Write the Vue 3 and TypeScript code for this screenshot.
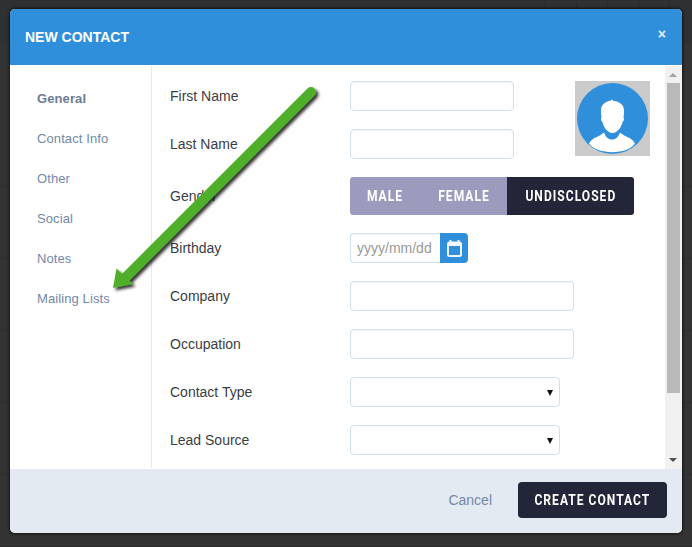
<script setup lang="ts">
const navItems: string[] = ['General', 'Contact Info', 'Other', 'Social', 'Notes', 'Mailing Lists']
</script>

<template>
  <div class="backdrop">
    <div class="modal">
      <header class="head">
        <h1>NEW CONTACT</h1>
        <span class="close">×</span>
      </header>
      <div class="body">
        <nav class="side">
          <a v-for="(n, i) in navItems" :key="n" :class="{ on: i === 0 }">{{ n }}</a>
        </nav>
        <div class="form">
          <div class="row"><label>First Name</label><input class="short" /></div>
          <div class="row"><label>Last Name</label><input class="short" /></div>
          <div class="row gender">
            <label>Gender</label>
            <div class="seg">
              <span class="male"><b>MALE</b></span><span class="female"><b>FEMALE</b></span><span class="und"><b>UNDISCLOSED</b></span>
            </div>
          </div>
          <div class="row">
            <label>Birthday</label>
            <div class="date">
              <input class="dinp" placeholder="yyyy/mm/dd" />
              <span class="cal">
                <svg width="15" height="17" viewBox="0 0 15 17">
                  <rect x="1" y="2.500" width="13" height="13.500" rx="1.500" fill="none" stroke="#f0f6fc" stroke-width="2" />
                  <rect x="1" y="2" width="13" height="4" fill="#f0f6fc" />
                  <rect x="2.500" y="0" width="2" height="3" fill="#f0f6fc" />
                  <rect x="10.500" y="0" width="2" height="3" fill="#f0f6fc" />
                </svg>
              </span>
            </div>
          </div>
          <div class="row"><label>Company</label><input class="long" /></div>
          <div class="row"><label>Occupation</label><input class="long" /></div>
          <div class="row"><label>Contact Type</label><div class="sel"><i></i></div></div>
          <div class="row"><label>Lead Source</label><div class="sel"><i></i></div></div>
          <div class="avatar">
            <svg width="71" height="71" viewBox="0 0 71 71">
              <circle cx="35.5" cy="35.5" r="35.5" fill="#308fda" />
              <path d="M12 60.500c2-4 6-6 10-7.500l5-3.500c1.500 4.500 4.500 7 8 7s6.500-2.500 8-7l5 3.500c4 1.500 8 3.500 10 7.500C51 72 20 72 12 60.500z" fill="#fff" />
              <path d="M33 18l2-1.500 1.500 1.500c6 .5 10.500 3.500 10.500 9.500 0 2.500 0 4.500-.500 7 1 1.500.500 3.500-1 4.500-1 5-5 11-10 11s-9-6-10-11c-1.500-1-2-3-1-4.500-.500-2.500-.500-4.500-.500-7 0-5.500 4-8.500 9-10z" fill="#fff" />
            </svg>
          </div>
        </div>
        <div class="bar">
          <span class="up"></span>
          <span class="thumb"></span>
          <span class="down"></span>
        </div>
      </div>
      <footer class="foot">
        <span class="cancel">Cancel</span>
        <span class="create"><b>CREATE CONTACT</b></span>
      </footer>
    </div>
    <svg class="arrow" width="692" height="547" viewBox="0 0 692 547">
      <defs>
        <filter id="sh" x="-10%" y="-10%" width="130%" height="130%">
          <feDropShadow dx="2.500" dy="2.500" stdDeviation="1.800" flood-color="#000" flood-opacity="0.8" />
        </filter>
      </defs>
      <g filter="url(#sh)" fill="#50ae2b">
        <path d="M311 92L125 278" stroke="#50ae2b" stroke-width="10" stroke-linecap="round" fill="none" />
        <path d="M113 288L116.500 268.500L133 284z" />
      </g>
    </svg>
  </div>
</template>

<style>
html, body { margin: 0; background: #333; }
</style>

<style scoped>
.backdrop {
  position: relative;
  width: 692px;
  height: 547px;
  overflow: hidden;
  padding: 9px 10px 14px;
  box-sizing: border-box;
  background:
    repeating-linear-gradient(90deg, rgba(0, 0, 0, 0.18) 0 1px, transparent 1px 31px) 545px 2px / 147px 8px no-repeat,
    repeating-linear-gradient(0deg, rgba(0, 0, 0, 0.1) 0 1px, transparent 1px 72px) 0 132px / 100% 415px no-repeat,
    linear-gradient(#2f3032, #2f3032) 0 0 / 100% 43px no-repeat,
    #333;
  font-family: "Liberation Sans", Arial, sans-serif;
}
.modal {
  width: 672px;
  height: 524px;
  border-radius: 5px;
  overflow: hidden;
  display: flex;
  flex-direction: column;
  background: #fff;
  box-shadow: 0 0 3px 1px rgba(0, 0, 0, 0.6);
}
.head {
  height: 56px;
  flex: none;
  background: #308fda;
  display: flex;
  align-items: flex-start;
  justify-content: space-between;
  padding: 0 15px;
  box-sizing: border-box;
  color: #fff;
}
.head h1 {
  margin: 21px 0 0;
  font-size: 14px;
  line-height: 14px;
  font-weight: 700;
}
.close {
  font-size: 14px;
  font-weight: 700;
  line-height: 16px;
  margin: 17px 1px 0 0;
  color: #e6f1fa;
}
.body {
  flex: 1;
  display: flex;
  min-height: 0;
  padding-top: 1px;
}
.side {
  width: 142px;
  flex: none;
  box-sizing: border-box;
  border-right: 1px solid #e5e9ee;
  padding: 25px 0 0 27px;
  margin-bottom: 1px;
  display: flex;
  flex-direction: column;
  gap: 24px;
}
.side a {
  font-size: 13px;
  line-height: 16px;
  letter-spacing: 0.1px;
  color: #7388a8;
}
.side a.on {
  font-weight: 700;
  color: #6d7b96;
}
.form {
  flex: 1;
  position: relative;
  padding: 15px 0 0 18px;
  display: flex;
  flex-direction: column;
  gap: 18px;
  min-width: 0;
}
.row {
  display: flex;
  align-items: center;
  height: 30px;
}
.row.gender { height: 38px; }
.row label {
  width: 180px;
  flex: none;
  font-size: 14px;
  color: #3a3d44;
}
input, .sel {
  box-sizing: border-box;
  height: 30px;
  border: 1px solid #cfdfec;
  border-radius: 4px;
  background: #fff;
  box-shadow: inset 0 1px 1px rgba(0, 0, 0, 0.05);
  outline: none;
  padding: 0;
}
.short { width: 164px; }
.long { width: 224px; }
.sel { width: 210px; position: relative; box-shadow: none; }
.sel i {
  position: absolute;
  right: 6px;
  top: 12px;
  width: 0;
  height: 0;
  border-left: 3px solid transparent;
  border-right: 3px solid transparent;
  border-top: 6px solid #111;
}
.seg {
  display: flex;
  height: 38px;
  width: 284px;
  border-radius: 3px;
  overflow: hidden;
  font-family: "Roboto", sans-serif;
  font-size: 14px;
  letter-spacing: 1.2px;
  color: #fff;
  line-height: 38px;
  text-align: center;
}
.seg b, .create b {
  display: inline-block;
  font-weight: 700;
  transform: scaleX(0.86);
}
.male { width: 71px; background: #9a9bbd; }
.female { width: 86px; background: #9a9bbd; }
.und { width: 127px; background: #232538; }
.date { display: flex; }
.dinp {
  width: 90px;
  border-radius: 4px 0 0 4px;
  border-right: none;
  padding-left: 6px;
  font-family: "Liberation Sans", sans-serif;
  font-size: 14px;
}
.dinp::placeholder { color: #999; opacity: 1; }
.cal {
  width: 28px;
  height: 30px;
  background: #308fda;
  border-radius: 0 4px 4px 0;
  display: flex;
  align-items: center;
  justify-content: center;
}
.avatar {
  position: absolute;
  left: 423px;
  top: 15px;
  width: 75px;
  height: 75px;
  background: #cbcbcb;
  display: flex;
  align-items: center;
  justify-content: center;
}
.bar {
  width: 17px;
  flex: none;
  background: #f1f1f1;
  position: relative;
  display: flex;
  flex-direction: column;
  align-items: center;
}
.thumb {
  position: absolute;
  top: 17px;
  left: 2px;
  width: 13px;
  height: 310px;
  background: #b9b9b9;
}
.up, .down {
  position: absolute;
  left: 4px;
  width: 0;
  height: 0;
  border-left: 4px solid transparent;
  border-right: 4px solid transparent;
}
.up { top: 7px; border-bottom: 4px solid #a3a3a3; }
.down { bottom: 7px; border-top: 4px solid #505050; }
.foot {
  height: 64px;
  flex: none;
  background: #e4eaf1;
  display: flex;
  align-items: center;
  justify-content: flex-end;
  padding: 0 15px 2px 0;
  box-sizing: border-box;
}
.cancel {
  font-size: 14px;
  color: #7388a8;
  margin-right: 26px;
}
.create {
  width: 149px;
  height: 36px;
  background: #232538;
  border-radius: 4px;
  color: #fff;
  font-family: "Roboto", sans-serif;
  font-size: 14px;
  letter-spacing: 1.2px;
  line-height: 36px;
  text-align: center;
}
.arrow {
  position: absolute;
  left: 0;
  top: 0;
  pointer-events: none;
}
</style>
